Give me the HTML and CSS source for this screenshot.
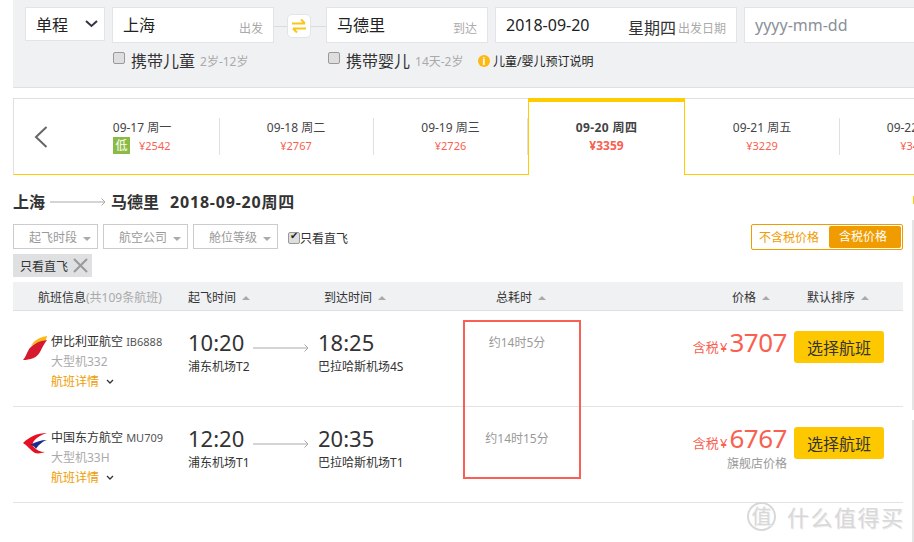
FILE: index.html
```html
<!DOCTYPE html>
<html lang="en">
<head>
    <meta charset="UTF-8">
    <meta name="viewport" content="width=device-width, initial-scale=1.0">
    <title>机票查询</title>
    <link rel="stylesheet" href="styles.css">
</head>
<body>
    <div class="search-panel">
        <div class="search-row">
            <div class="field trip-type">
                <span>单程</span>
                <svg class="trip-arrow" width="13" height="8" viewBox="0 0 13 8"><path d="M1 1l5.500 5L12 1" fill="none" stroke="#333344" stroke-width="2"/></svg>
            </div>
            <div class="field city"><span>上海</span><small>出发</small></div>
            <div class="swap">
                <div class="swap-btn">
                    <svg width="16" height="16" viewBox="0 0 16 16"><path d="M1 5.500h13M10 1.500l4 4M15 10.500H2M6 14.500l-4-4" fill="none" stroke="#fcc419" stroke-width="2"/></svg>
                </div>
            </div>
            <div class="field city"><span>马德里</span><small>到达</small></div>
            <div class="field date">
                <span>2018-09-20</span>
                <em>星期四</em><small>出发日期</small>
            </div>
            <div class="field return-date">yyyy-mm-dd</div>
        </div>
        <div class="passenger-row">
            <label class="passenger child"><input type="checkbox">携带儿童 <small>2岁-12岁</small></label>
            <label class="passenger infant"><input type="checkbox">携带婴儿 <small>14天-2岁</small></label>
            <span class="note"><i>i</i>儿童/婴儿预订说明</span>
        </div>
    </div>

    <div class="date-strip">
        <div class="strip-prev">
            <svg width="14" height="22" viewBox="0 0 14 22"><path d="M12.500 1L2 11l10.500 10" fill="none" stroke="#666" stroke-width="2"/></svg>
        </div>
        <div class="day">
            <p>09-17 周一</p>
            <div class="day-price low"><b>低</b><span>¥2542</span></div>
        </div>
        <div class="day">
            <p>09-18 周二</p>
            <div class="day-price"><span>¥2767</span></div>
        </div>
        <div class="day before-active">
            <p>09-19 周三</p>
            <div class="day-price"><span>¥2726</span></div>
        </div>
        <div class="day active">
            <p>09-20 周四</p>
            <div class="day-price"><span>¥3359</span></div>
        </div>
        <div class="day">
            <p>09-21 周五</p>
            <div class="day-price"><span>¥3229</span></div>
        </div>
        <div class="day">
            <p>09-22 周六</p>
            <div class="day-price"><span>¥3480</span></div>
        </div>
    </div>

    <h2 class="route">
        <span>上海</span>
        <svg width="57" height="8" viewBox="0 0 57 8"><path d="M0 4h55M51.500 .5L55 4l-3.500 3.500" fill="none" stroke="#aaa" stroke-width="1"/></svg>
        <span>马德里</span>
        <span class="route-date">2018-09-20周四</span>
    </h2>

    <div class="filter-row">
        <div class="filter">起飞时段<i></i></div>
        <div class="filter">航空公司<i></i></div>
        <div class="filter">舱位等级<i></i></div>
        <label class="direct"><input type="checkbox" checked>只看直飞</label>
        <div class="tax-toggle">
            <span>不含税价格</span>
            <span class="on">含税价格</span>
        </div>
    </div>

    <div class="tag-row">
        <div class="tag">只看直飞
            <svg width="15" height="15" viewBox="0 0 15 15"><path d="M1 1l13 13M14 1L1 14" fill="none" stroke="#999" stroke-width="2"/></svg>
        </div>
    </div>

    <div class="list-head">
        <div class="h-info">航班信息<small>(共109条航班)</small></div>
        <div class="h-dep">起飞时间<i></i></div>
        <div class="h-arr">到达时间<i></i></div>
        <div class="h-dur">总耗时<i></i></div>
        <div class="h-price">价格<i></i></div>
        <div class="h-sort">默认排序<i></i></div>
    </div>

    <div class="flight">
        <div class="logo">
            <svg width="24" height="24" viewBox="0 0 24 24">
                <path d="M24 0C17 1 11 4 8 10C12 7 18 5 23 4Z" fill="#fcb813"/>
                <path d="M24 4C15 5 8 9 5 15C3 19 2 22 0 24C7 24 14 22 17 16C19 12 21 8 24 4Z" fill="#d7192d"/>
            </svg>
        </div>
        <div class="airline">
            <div class="airline-name">伊比利亚航空 <span>IB6888</span></div>
            <div class="plane">大型机332</div>
            <div class="details">航班详情<svg width="8" height="6" viewBox="0 0 8 6"><path d="M1 1l3 3 3-3" fill="none" stroke="#333" stroke-width="1.300"/></svg></div>
        </div>
        <div class="depart">
            <div class="time">10:20</div>
            <div class="airport">浦东机场T2</div>
            <svg class="flight-arrow" width="57" height="8" viewBox="0 0 57 8"><path d="M0 4h55M51.500 .5L55 4l-3.500 3.500" fill="none" stroke="#aaa" stroke-width="1"/></svg>
        </div>
        <div class="arrive">
            <div class="time">18:25</div>
            <div class="airport">巴拉哈斯机场4S</div>
        </div>
        <div class="duration">约14时5分</div>
        <div class="price">
            <div class="price-line"><small>含税 ¥</small><strong>3707</strong></div>
        </div>
        <div class="action"><button type="button">选择航班</button></div>
    </div>

    <div class="flight">
        <div class="logo">
            <svg width="24" height="24" viewBox="0 0 24 24">
                <path d="M24 1C14 1 6 5 0 11C4 13 7 18 12 21C15 22 19 21 22 20C17 20 13 18 10 14C8 10 14 4 24 1Z" fill="#e60f23"/>
                <path d="M24 8C18 8 12 10 7 13C10 13 12 15 13 17C15 14 18 10 24 8Z" fill="#1c2a8c"/>
            </svg>
        </div>
        <div class="airline">
            <div class="airline-name">中国东方航空 <span>MU709</span></div>
            <div class="plane">大型机33H</div>
            <div class="details">航班详情<svg width="8" height="6" viewBox="0 0 8 6"><path d="M1 1l3 3 3-3" fill="none" stroke="#333" stroke-width="1.300"/></svg></div>
        </div>
        <div class="depart">
            <div class="time">12:20</div>
            <div class="airport">浦东机场T1</div>
            <svg class="flight-arrow" width="57" height="8" viewBox="0 0 57 8"><path d="M0 4h55M51.500 .5L55 4l-3.500 3.500" fill="none" stroke="#aaa" stroke-width="1"/></svg>
        </div>
        <div class="arrive">
            <div class="time">20:35</div>
            <div class="airport">巴拉哈斯机场T1</div>
        </div>
        <div class="duration">约14时15分</div>
        <div class="price">
            <div class="price-line"><small>含税 ¥</small><strong>6767</strong></div>
            <div class="store-price">旗舰店价格</div>
        </div>
        <div class="action"><button type="button">选择航班</button></div>
    </div>

    <!-- red box and watermark sit on top of the screenshot -->
    <div class="highlight"></div>
    <div class="watermark"><span class="wm-badge">值</span><span>什么值得买</span></div>
</body>
</html>
```

FILE: styles.css
```css
html, body {
    height: 542px;
    overflow: hidden;
}
body {
    font-family: "Noto Sans", "Noto Sans CJK SC", sans-serif;
    font-size: 12px;
    color: #333;
    background-color: #fff;
    margin: 0;
    padding: 0;
    position: relative;
}
/* edge of the next column, just showing at the right of the frame */
body::before {
    content: "";
    position: absolute;
    left: 913px;
    top: 196px;
    width: 1px;
    height: 8px;
    background: #fc0;
}
body::after {
    content: "";
    position: absolute;
    left: 912px;
    top: 220px;
    width: 2px;
    height: 322px;
    background: linear-gradient(#e4e4e4 0 190px, transparent 190px 200px, #e4e4e4 200px);
}
small, em, i {
    font-style: normal;
}

/* search panel */
.search-panel {
    height: 80px;
    margin-left: 13px;
    padding: 7px 0 0 12px;
    background-color: #f0f1f3;
    border-bottom: 1px solid #e0e0e0;
    overflow: hidden;
}
.search-row {
    display: flex;
    width: 1000px;
}
.field {
    display: flex;
    align-items: center;
    box-sizing: border-box;
    height: 36px;
    padding: 0 10px;
    background: #fff;
    border: 1px solid #e2e4e8;
    font-size: 16px;
    color: #222;
}
.trip-type {
    width: 80px;
    height: 34px;
    justify-content: space-between;
    margin-right: 7px;
    padding-right: 6px;
}
.city {
    width: 162px;
    justify-content: space-between;
    padding-bottom: 2px;
}
.field small {
    font-size: 12px;
    color: #aaa;
    margin-top: 8px;
}
.swap {
    width: 52px;
    height: 36px;
    display: flex;
    align-items: center;
    justify-content: center;
    background: linear-gradient(#d9dbde, #d9dbde) center 19px / 100% 1px no-repeat;
}
.swap-btn {
    width: 22px;
    height: 22px;
    margin: 2px 2px 0 0;
    display: flex;
    align-items: center;
    justify-content: center;
    background: #fff;
    border: 1px solid #e2e4e8;
    border-radius: 5px;
}
.date {
    width: 242px;
    margin: 0 7px;
}
.date span {
    flex: 1;
}
.date em {
    font-size: 16px;
    color: #333;
    margin-top: 4px;
}
.date small {
    margin-left: 2px;
    margin-top: 6px;
}
.return-date {
    width: 200px;
    color: #8a8f99;
}
.passenger-row {
    display: flex;
    align-items: center;
    margin: 6px 0 0 88px;
    height: 22px;
}
.passenger {
    display: flex;
    align-items: center;
    font-size: 16px;
    color: #333;
}
.passenger small {
    font-size: 12px;
    color: #aaa;
    margin-left: 5px;
    margin-top: 2px;
}
.passenger input, .direct input {
    appearance: none;
    box-sizing: border-box;
    width: 12px;
    height: 12px;
    margin: 0 6px 0 0;
    background: #dedede;
    border: 1px solid #999;
    border-radius: 2px;
    position: relative;
}
.passenger input {
    margin-top: -4px;
}
.child {
    width: 215px;
}
.infant {
    width: 150px;
}
.note {
    display: flex;
    align-items: center;
    margin-top: 2px;
    font-size: 12px;
    color: #222;
}
.note i {
    width: 12px;
    height: 12px;
    margin-right: 3px;
    border-radius: 50%;
    background: #fcb813;
    color: #fff;
    font-size: 10px;
    font-weight: bold;
    line-height: 12px;
    text-align: center;
}

/* date strip */
.date-strip {
    display: flex;
    height: 75px;
    margin: 10px 0 0 13px;
    border-top: 1px solid #e0e0e0;
    border-left: 1px solid #e0e0e0;
    border-bottom: 1px solid #fc0;
    overflow-x: clip;
}
.strip-prev {
    flex: none;
    width: 51px;
    display: flex;
    align-items: center;
    padding-left: 20px;
    box-sizing: border-box;
}
.day {
    flex: none;
    position: relative;
    box-sizing: border-box;
    width: 154px;
    padding-top: 20px;
    text-align: center;
    color: #444;
}
.day::after {
    content: "";
    position: absolute;
    right: -1px;
    top: 19px;
    height: 37px;
    width: 1px;
    background: #e0e0e0;
}
.day p {
    margin: 0;
    line-height: 17px;
}
.day-price {
    font-size: 11px;
    line-height: 19px;
    color: #f9604f;
}
.day-price.low {
    display: flex;
    justify-content: flex-start;
    align-items: center;
    padding-left: 48px;
}
.day-price.low b {
    width: 17px;
    height: 17px;
    margin-right: 9px;
    background: #8bbb45;
    color: #fff;
    font-size: 12px;
    font-weight: normal;
    line-height: 17px;
}
.before-active {
    width: 155px;
}
.before-active::after {
    right: 0;
}
.active {
    width: 157px;
    margin-top: -1px;
    height: 77px;
    padding-top: 17px;
    background: #fff;
    border: 1px solid #fc0;
    border-top: 4px solid #fc0;
    border-bottom: none;
    font-weight: bold;
}
.active p {
    letter-spacing: 0.4px;
}
.active .day-price {
    font-size: 12px;
}
.active::after {
    display: none;
}

/* route heading */
.route {
    display: flex;
    align-items: center;
    height: 24px;
    margin: 14px 0 0 13px;
    font-size: 16px;
    font-weight: bold;
    color: #333;
}
.route svg {
    margin: 2px 4px 0 5px;
}
.route-date {
    margin-left: 11px;
    letter-spacing: 0.8px;
}

/* filters */
.filter-row {
    display: flex;
    align-items: center;
    height: 25px;
    margin: 11px 11px 0 13px;
}
.filter {
    box-sizing: border-box;
    width: 85px;
    height: 25px;
    margin-right: 5px;
    padding-left: 15px;
    border: 1px solid #ccc;
    font-size: 12px;
    line-height: 25px;
    color: #999;
}
.filter i, .list-head i {
    display: inline-block;
    width: 0;
    height: 0;
    margin-left: 6px;
    vertical-align: middle;
    border-left: 4px solid transparent;
    border-right: 4px solid transparent;
    border-top: 4px solid #aaa;
}
.direct {
    display: flex;
    align-items: center;
    margin: 2px 0 0 5px;
    font-size: 12px;
    color: #333;
}
.direct input {
    margin-right: 0;
}
.direct input:checked::after {
    content: "✔";
    position: absolute;
    left: 1px;
    top: -3px;
    font-size: 10px;
    color: #222;
}
.tax-toggle {
    display: flex;
    align-items: center;
    align-self: flex-start;
    box-sizing: border-box;
    width: 152px;
    height: 26px;
    margin-left: auto;
    padding: 1px;
    border: 1px solid #f09c00;
    border-radius: 2px;
    font-size: 12px;
    color: #f09c00;
}
.tax-toggle span {
    padding-left: 6px;
    width: 70px;
}
.tax-toggle .on {
    flex: 1;
    height: 22px;
    line-height: 22px;
    padding-left: 10px;
    background: #f09c00;
    color: #fff;
    border-radius: 2px;
}
.tag-row {
    margin: 5px 0 0 13px;
}
.tag {
    display: inline-flex;
    align-items: center;
    height: 23px;
    width: 79px;
    box-sizing: border-box;
    padding-left: 7px;
    background: #dfe0e2;
    font-size: 12px;
    color: #333;
}
.tag svg {
    margin-left: 5px;
}

/* flight list */
.list-head {
    display: grid;
    grid-template-columns: 175px 136px 172px 236px 75px 1fr;
    align-items: center;
    box-sizing: border-box;
    height: 29px;
    margin: 5px 11px 0 13px;
    padding-top: 2px;
    background: #f0f1f3;
    border-bottom: 1px solid #e0e0e0;
    font-size: 12px;
    color: #333;
}
.h-info {
    padding-left: 25px;
}
.h-info small {
    font-size: 12px;
    color: #aaa;
}
.list-head i {
    border-top: none;
    border-bottom: 4px solid #aaa;
    margin-top: -2px;
}
.flight {
    display: grid;
    grid-template-columns: 38px 137px 130px 145px 118px 206px 1fr;
    box-sizing: border-box;
    height: 96px;
    margin: 0 11px 0 13px;
    border-bottom: 1px solid #e3e3e3;
}
.logo {
    padding: 25px 0 0 10px;
}
.airline {
    padding-top: 22px;
}
.airline-name, .airport {
    line-height: 18px;
    color: #333;
}
.airline-name span {
    font-size: 11px;
    color: #555;
}
.plane {
    margin-top: 2px;
    line-height: 18px;
    color: #aaa;
}
.details {
    margin-top: 2px;
    line-height: 18px;
    color: #f09c00;
}
.details svg {
    margin: 0 0 1px 7px;
}
.depart {
    position: relative;
    padding-top: 16px;
}
.arrive {
    padding-top: 16px;
}
.time {
    font-size: 22px;
    line-height: 31px;
    color: #333;
}
.flight-arrow {
    position: absolute;
    left: 65px;
    top: 33px;
}
.duration {
    padding: 23px 10px 0 0;
    text-align: center;
    line-height: 18px;
    color: #999;
}
.price {
    padding-top: 18px;
    text-align: right;
}
.price-line {
    line-height: 26px;
    color: #f9604f;
}
.price-line small {
    font-size: 13px;
    margin-right: 2px;
    word-spacing: -2px;
}
.price-line strong {
    font-size: 26px;
    font-weight: normal;
    letter-spacing: -0.5px;
}
.store-price {
    line-height: 14px;
    color: #999;
}
.action {
    padding: 20px 0 0 7px;
}
.action button {
    width: 90px;
    height: 32px;
    padding: 0;
    background-color: #fdc800;
    color: #333;
    border: none;
    border-radius: 3px;
    font-family: inherit;
    font-size: 16px;
}

/* overlays */
.highlight {
    position: absolute;
    left: 463px;
    top: 320px;
    width: 114px;
    height: 155px;
    border: 2px solid #f96055;
}
.watermark {
    position: absolute;
    left: 747px;
    top: 500px;
    display: flex;
    align-items: center;
    font-size: 22px;
    color: #d8d8d8;
    letter-spacing: 1.500px;
    text-shadow: 1px 1px 0 #eee;
}
.wm-badge {
    width: 25px;
    height: 25px;
    margin-right: 11px;
    border: 2px solid #d8d8d8;
    border-radius: 50%;
    font-size: 20px;
    line-height: 25px;
    text-align: center;
    letter-spacing: 0;
}
```
